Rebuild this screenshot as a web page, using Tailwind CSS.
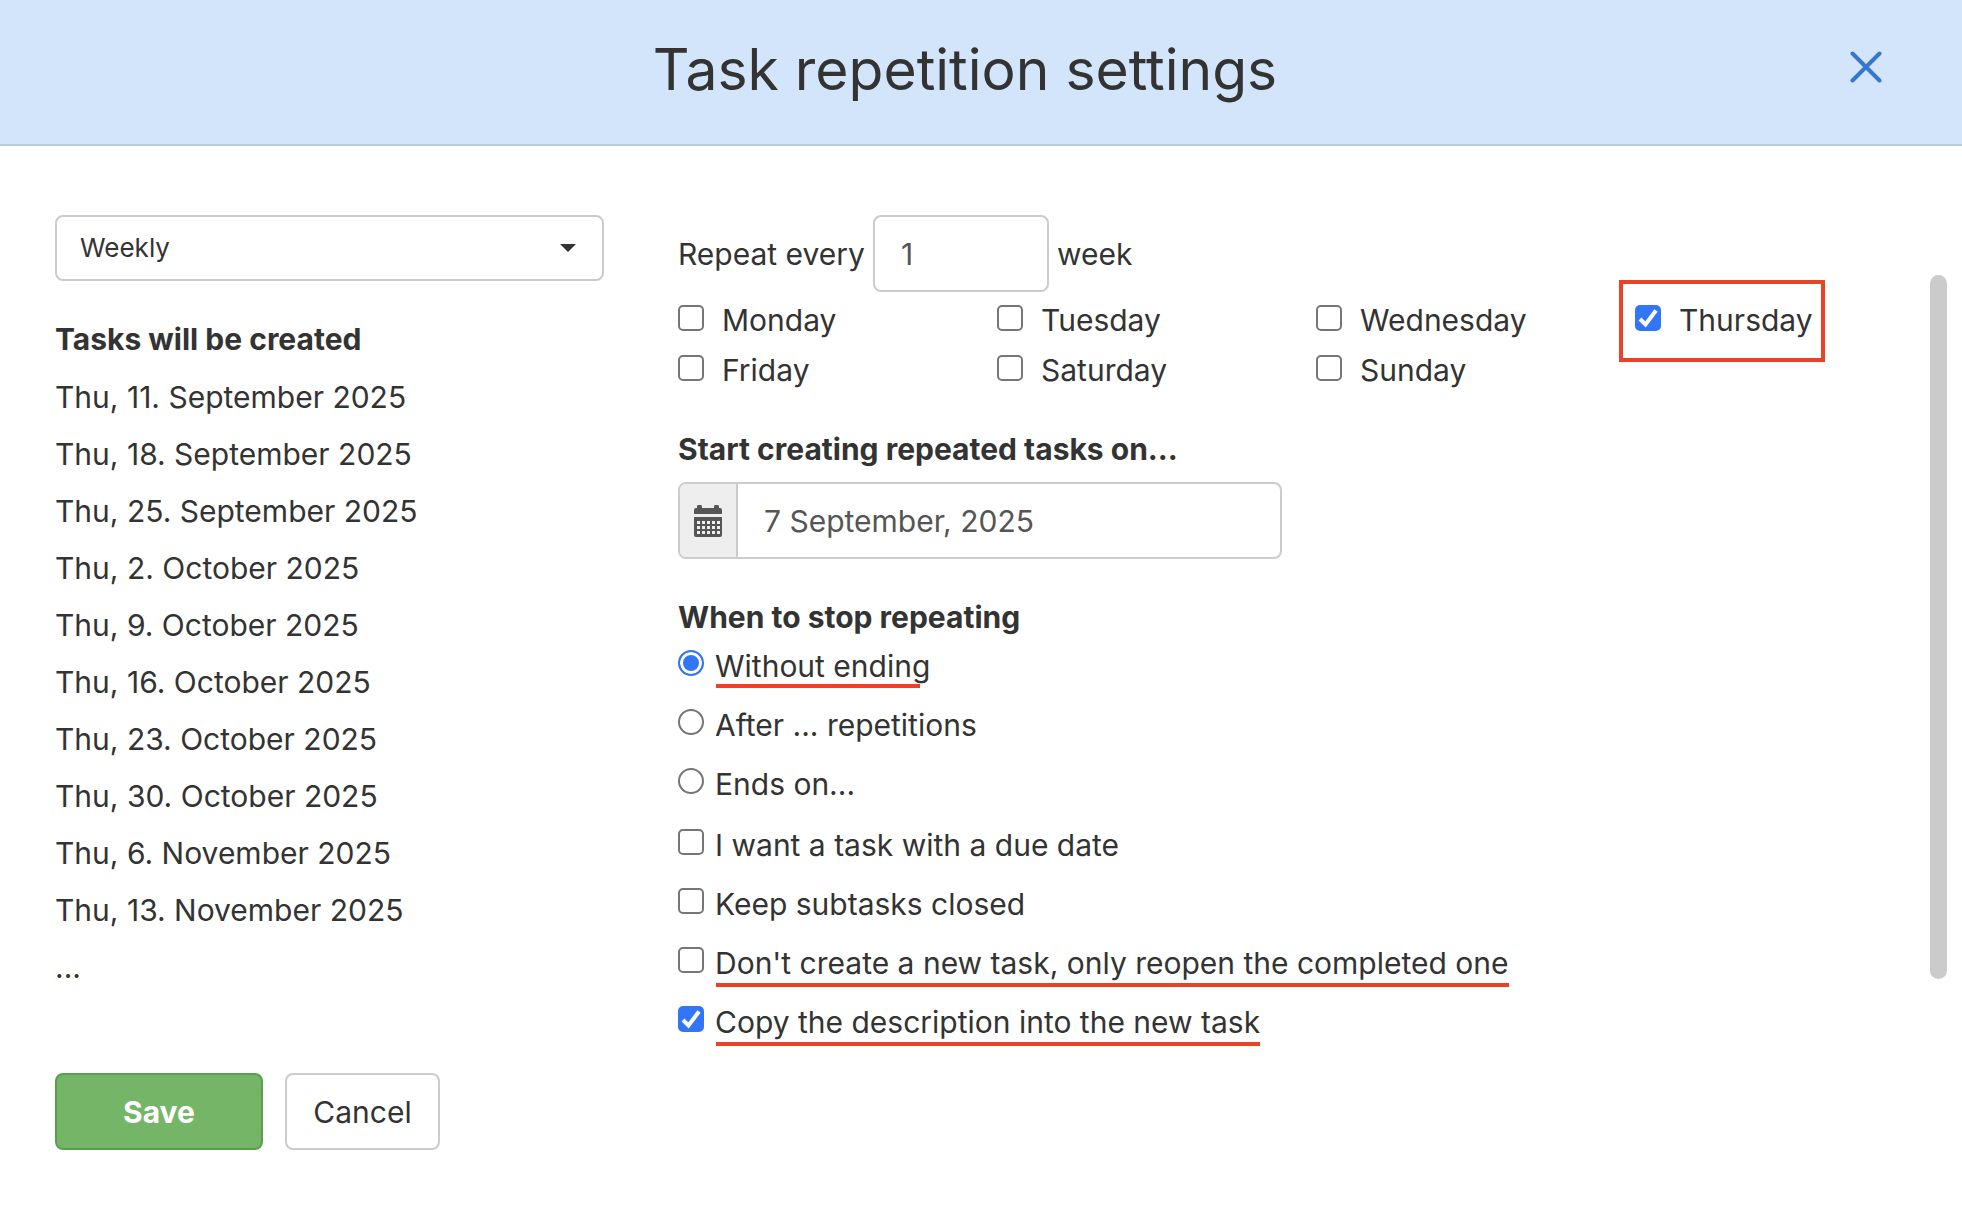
<!DOCTYPE html>
<html lang="en">
  <head>
    <meta charset="UTF-8" />
    <meta name="viewport" content="width=device-width, initial-scale=1.0" />
    <title>Task repetition settings</title>
    <script src="https://cdn.jsdelivr.net/npm/@tailwindcss/browser@4"></script>
  </head>
  <body
    class="relative min-h-screen bg-white font-['Inter','Liberation_Sans',sans-serif] text-[30px] leading-[40px] text-[#333333]"
  >
    <!-- Header -->
    <header
      class="relative flex items-center justify-center border-b-2 border-[#b9cbde] bg-[#d3e5fa] pt-[30px] pr-8 pb-[34px]"
    >
      <h1 class="text-[57px] leading-[80px]">Task repetition settings</h1>
      <button
        type="button"
        aria-label="Close"
        class="absolute top-[47px] right-[76px] flex size-10 items-center justify-center text-[#3577d0]"
      >
        <svg class="size-8" viewBox="0 0 32 32" fill="none" stroke="currentColor" stroke-width="4" stroke-linecap="round">
          <path d="M2.5 2.5 29.5 29.5M29.5 2.5 2.5 29.5" />
        </svg>
      </button>
    </header>

    <form>
      <main class="flex pt-[69px] pr-2 pl-[55px]">
        <!-- Interval and upcoming tasks -->
        <section class="w-[549px] shrink-0">
          <div class="grid items-center">
            <select
              aria-label="Repetition interval"
              class="col-start-1 row-start-1 h-[66px] w-full appearance-none rounded-lg border-2 border-[#cccccc] bg-white px-[23px] text-[26px]"
            >
              <option>Weekly</option>
            </select>
            <svg class="pointer-events-none col-start-1 row-start-1 mr-7 h-2 w-4 justify-self-end" viewBox="0 0 16 8" fill="#333333">
              <path d="M0 0h16L8 8z" />
            </svg>
          </div>
          <h2 class="mt-[30px] leading-[57px] font-bold">Tasks will be created</h2>
          <ul class="mt-px leading-[57px]">
            <li>Thu, 11. September 2025</li>
            <li>Thu, 18. September 2025</li>
            <li>Thu, 25. September 2025</li>
            <li>Thu, 2. October 2025</li>
            <li>Thu, 9. October 2025</li>
            <li>Thu, 16. October 2025</li>
            <li>Thu, 23. October 2025</li>
            <li>Thu, 30. October 2025</li>
            <li>Thu, 6. November 2025</li>
            <li>Thu, 13. November 2025</li>
            <li>...</li>
          </ul>
        </section>

        <!-- Repetition options -->
        <section class="ml-[74px] flex-1">
          <div class="flex items-center gap-2">
            <label for="every">Repeat every</label>
            <input
              id="every"
              type="text"
              value="1"
              class="h-[77px] w-[176px] rounded-lg border-2 border-[#cccccc] px-[26px] text-[#555555]"
            />
            <span>week</span>
          </div>

          <div class="mt-[3px] grid grid-cols-4 leading-[50px]">
            <label class="flex items-center gap-[18px]">
              <input type="checkbox" class="mb-1 size-[26px] appearance-none rounded-[5px] border-2 border-[#767676]" />
              Monday
            </label>
            <label class="flex items-center gap-[18px]">
              <input type="checkbox" class="mb-1 size-[26px] appearance-none rounded-[5px] border-2 border-[#767676]" />
              Tuesday
            </label>
            <label class="flex items-center gap-[18px]">
              <input type="checkbox" class="mb-1 size-[26px] appearance-none rounded-[5px] border-2 border-[#767676]" />
              Wednesday
            </label>
            <label class="relative flex items-center gap-[18px] justify-self-start">
              <span class="mb-1 grid">
                <input
                  type="checkbox"
                  checked
                  class="peer col-start-1 row-start-1 size-[26px] appearance-none rounded-[5px] border-2 border-[#767676] checked:border-[#3275f6] checked:bg-[#3275f6]"
                />
                <svg class="pointer-events-none invisible col-start-1 row-start-1 size-[26px] peer-checked:visible" viewBox="0 0 26 26" fill="none" stroke="white" stroke-width="4">
                  <path d="M5 14 10.5 19.5 21 5.5" />
                </svg>
              </span>
              Thursday
              <span class="pointer-events-none absolute -top-[15px] -right-3 -bottom-[17px] -left-4 border-4 border-[#ea4127]"></span>
            </label>
            <label class="flex items-center gap-[18px]">
              <input type="checkbox" class="mb-1 size-[26px] appearance-none rounded-[5px] border-2 border-[#767676]" />
              Friday
            </label>
            <label class="flex items-center gap-[18px]">
              <input type="checkbox" class="mb-1 size-[26px] appearance-none rounded-[5px] border-2 border-[#767676]" />
              Saturday
            </label>
            <label class="flex items-center gap-[18px]">
              <input type="checkbox" class="mb-1 size-[26px] appearance-none rounded-[5px] border-2 border-[#767676]" />
              Sunday
            </label>
          </div>

          <h2 class="mt-[34px] font-bold"><label for="start">Start creating repeated tasks on...</label></h2>
          <div class="mt-[13px] flex h-[77px] w-[604px] overflow-hidden rounded-lg border-2 border-[#cccccc]">
            <span class="flex w-[58px] items-center justify-center border-r-2 border-[#cccccc] bg-[#eeeeee]">
              <svg class="h-8 w-7" viewBox="0 0 28 32" fill="#555555">
                <path d="M2 3h1V2a2 2 0 0 1 5 0v1h12V2a2 2 0 0 1 5 0v1h1a2 2 0 0 1 2 2v4H0V5a2 2 0 0 1 2-2Z" />
                <path
                  fill-rule="evenodd"
                  d="M0 12h28v18a2 2 0 0 1-2 2H2a2 2 0 0 1-2-2ZM3 16v3h3v-3ZM8 16v3h3v-3ZM13 16v3h3v-3ZM18 16v3h3v-3ZM23 16v3h3v-3ZM3 21v3h3v-3ZM8 21v3h3v-3ZM13 21v3h3v-3ZM18 21v3h3v-3ZM23 21v3h3v-3ZM3 26v3h3v-3ZM8 26v3h3v-3ZM13 26v3h3v-3ZM18 26v3h3v-3ZM23 26v3h3v-3Z"
                />
              </svg>
            </span>
            <input id="start" type="text" value="7 September, 2025" class="min-w-0 flex-1 px-[26px] text-[#555555]" />
          </div>

          <h2 class="mt-[38px] font-bold">When to stop repeating</h2>
          <div class="flex flex-col items-start leading-[59px]">
            <label class="relative flex items-center gap-[11px]">
              <input
                type="radio"
                name="ending"
                checked
                class="mb-2 size-[26px] appearance-none rounded-full border-2 border-[#767676] checked:border-[#3275f6] checked:bg-[#3275f6] checked:shadow-[inset_0_0_0_3px_white]"
              />
              Without ending
              <span class="pointer-events-none absolute right-[10px] bottom-2 left-[38px] h-1 bg-[#ea4127]"></span>
            </label>
            <label class="flex items-center gap-[11px]">
              <input
                type="radio"
                name="ending"
                class="mb-2 size-[26px] appearance-none rounded-full border-2 border-[#767676] checked:border-[#3275f6] checked:bg-[#3275f6] checked:shadow-[inset_0_0_0_3px_white]"
              />
              After ... repetitions
            </label>
            <label class="flex items-center gap-[11px]">
              <input
                type="radio"
                name="ending"
                class="mb-2 size-[26px] appearance-none rounded-full border-2 border-[#767676] checked:border-[#3275f6] checked:bg-[#3275f6] checked:shadow-[inset_0_0_0_3px_white]"
              />
              Ends on...
            </label>
          </div>
          <div class="mt-[2px] flex flex-col items-start leading-[59px]">
            <label class="flex items-center gap-[11px]">
              <input type="checkbox" class="mb-2 size-[26px] appearance-none rounded-[5px] border-2 border-[#767676]" />
              I want a task with a due date
            </label>
            <label class="flex items-center gap-[11px]">
              <input type="checkbox" class="mb-2 size-[26px] appearance-none rounded-[5px] border-2 border-[#767676]" />
              Keep subtasks closed
            </label>
            <label class="relative flex items-center gap-[11px]">
              <input type="checkbox" class="mb-2 size-[26px] appearance-none rounded-[5px] border-2 border-[#767676]" />
              Don't create a new task, only reopen the completed one
              <span class="pointer-events-none absolute right-0 bottom-[6px] left-[38px] h-1 bg-[#ea4127]"></span>
            </label>
            <label class="relative flex items-center gap-[11px]">
              <span class="mb-2 grid">
                <input
                  type="checkbox"
                  checked
                  class="peer col-start-1 row-start-1 size-[26px] appearance-none rounded-[5px] border-2 border-[#767676] checked:border-[#3275f6] checked:bg-[#3275f6]"
                />
                <svg class="pointer-events-none invisible col-start-1 row-start-1 size-[26px] peer-checked:visible" viewBox="0 0 26 26" fill="none" stroke="white" stroke-width="4">
                  <path d="M5 14 10.5 19.5 21 5.5" />
                </svg>
              </span>
              Copy the description into the new task
              <span class="pointer-events-none absolute right-0 bottom-[6px] left-[38px] h-1 bg-[#ea4127]"></span>
            </label>
          </div>
        </section>
      </main>

      <footer class="mt-[21px] flex gap-[22px] pb-14 pl-[55px]">
        <button type="submit" class="h-[77px] w-[208px] rounded-lg border-2 border-[#5b9e50] bg-[#75b567] font-bold text-white">
          Save
        </button>
        <button type="button" class="h-[77px] w-[155px] rounded-lg border-2 border-[#cccccc] bg-white">Cancel</button>
      </footer>
    </form>

    <!-- Scrollbar thumb -->
    <div class="absolute top-[275px] right-[15px] h-[704px] w-[17px] rounded-full bg-[#cbcbcb]"></div>
  </body>
</html>
